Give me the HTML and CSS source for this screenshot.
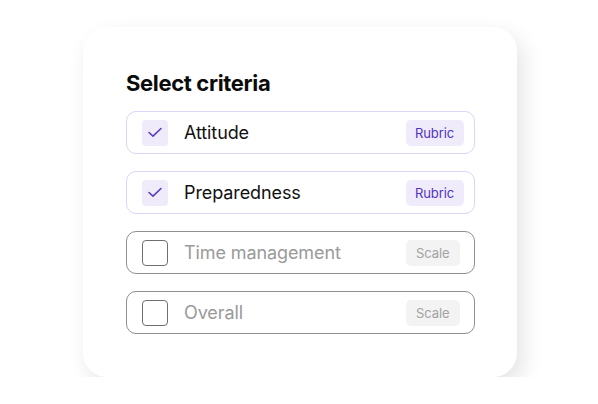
FILE: index.html
```html
<!DOCTYPE html>
<html lang="en">

<head>
    <meta charset="UTF-8">
    <meta name="viewport" content="width=device-width, initial-scale=1.0">
    <title>Select criteria</title>
    <link rel="stylesheet" href="styles.css">
</head>

<body>
    <div class="card">
        <h1>Select criteria</h1>
        <div class="list">
            <div class="row checked">
                <span class="box">
                    <svg viewBox="0 0 26 26" width="26" height="26"><path d="M7 12.5 L11 16.2 L19 8.5" /></svg>
                </span>
                <span class="label">Attitude</span>
                <span class="slot"><span class="badge">Rubric</span></span>
            </div>
            <div class="row checked">
                <span class="box">
                    <svg viewBox="0 0 26 26" width="26" height="26"><path d="M7 12.5 L11 16.2 L19 8.5" /></svg>
                </span>
                <span class="label">Preparedness</span>
                <span class="slot"><span class="badge">Rubric</span></span>
            </div>
            <div class="row">
                <span class="box"></span>
                <span class="label">Time management</span>
                <span class="slot"><span class="badge">Scale</span></span>
            </div>
            <div class="row">
                <span class="box"></span>
                <span class="label">Overall</span>
                <span class="slot"><span class="badge">Scale</span></span>
            </div>
        </div>
    </div>
</body>

</html>
```

FILE: styles.css
```css
body {
    font-family: Inter, "Liberation Sans", sans-serif;
    margin: 0;
    padding: 27px 0 0 83px;
    background-color: white;
}

.card {
    width: 434px;
    height: 350px;
    box-sizing: border-box;
    padding: 42px 42px 0 43px;
    background-color: white;
    border-radius: 24px;
    box-shadow: 6px 9px 22px rgba(0, 0, 0, 0.11);
}

h1 {
    margin: 0 0 14px;
    font-size: 22px;
    line-height: 28px;
    font-weight: 700;
    letter-spacing: -0.35px;
    color: #0b0b0b;
}

.list {
    display: flex;
    flex-direction: column;
    gap: 17px;
}

.row {
    display: flex;
    align-items: center;
    height: 43px;
    box-sizing: border-box;
    padding: 0 10px 0 15px;
    border: 1px solid #8f8f8f;
    border-radius: 10px;
}

.row.checked {
    border-color: #dcd5f7;
}

.box {
    width: 26px;
    height: 26px;
    box-sizing: border-box;
    border: 1px solid #6f6f6f;
    border-radius: 4px;
    flex: none;
}

.row.checked .box {
    border: none;
    background-color: #efebfb;
}

.box svg {
    display: block;
}

.box path {
    fill: none;
    stroke: #5a3ec2;
    stroke-width: 1.6;
    stroke-linecap: round;
    stroke-linejoin: round;
}

.label {
    flex: 1;
    margin-left: 16px;
    font-size: 18px;
    letter-spacing: -0.1px;
    color: #9a9a9a;
}

.row.checked .label {
    color: #111;
}

.slot {
    width: 58px;
    display: flex;
}

.badge {
    height: 26px;
    line-height: 26px;
    padding: 0 11px 0 10px;
    border-radius: 5px;
    font-size: 13px;
    letter-spacing: -0.1px;
    color: #a2a2a2;
    background-color: #f3f3f3;
}

.row.checked .badge {
    padding: 0 10px 0 9px;
    color: #5133c0;
    background-color: #efebfb;
}
```
